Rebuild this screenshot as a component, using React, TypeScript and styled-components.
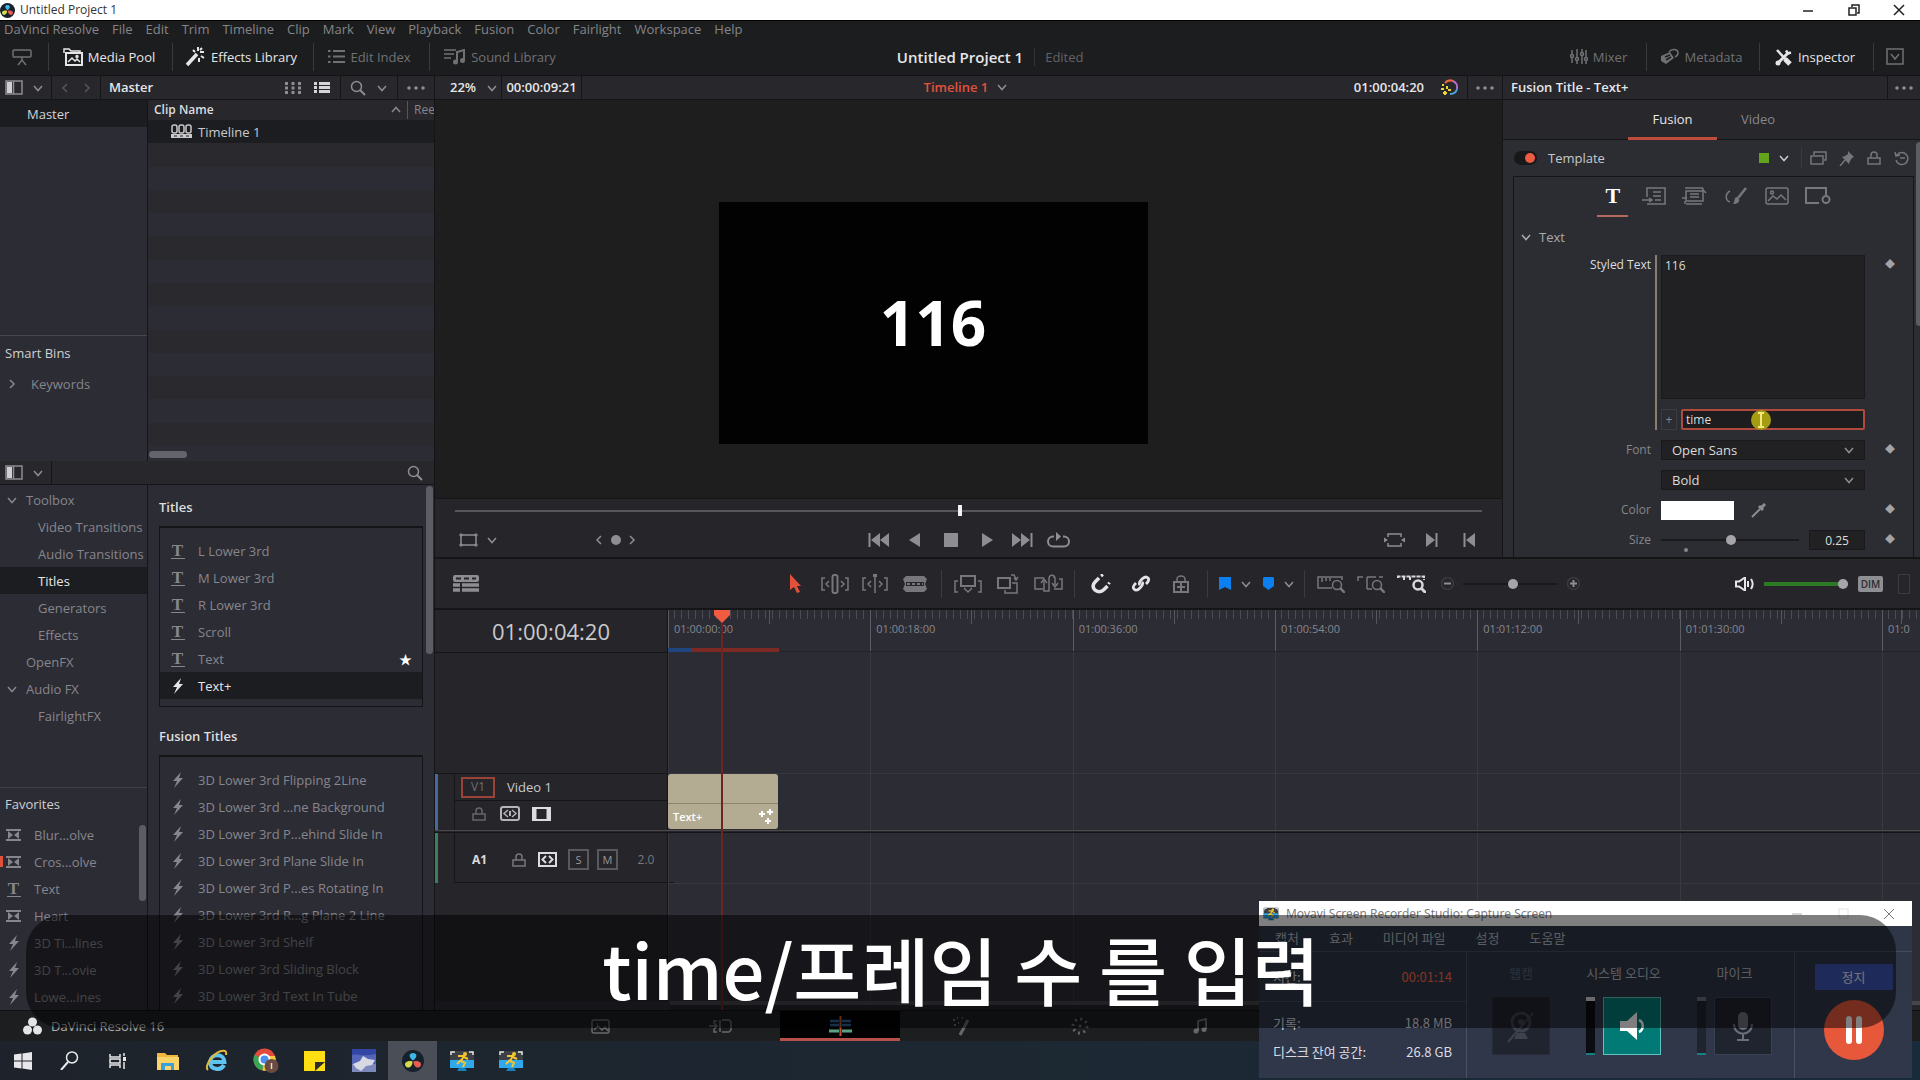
import React from "react";
import styled, { createGlobalStyle, css } from "styled-components";

const sans = `"Open Sans", "Noto Sans CJK KR", sans-serif`;
const c = {
  line: "#151518",
  bar: "#25252a",
  head: "#27272c",
  panel: "#2c2c35",
  dark: "#1c1d20",
  field: "#212123",
  dim: "#86868c",
  text: "#a9a9ae",
  bright: "#e6e6e8",
  red: "#e2513c",
};

const Global = createGlobalStyle`
  *, *::before, *::after { box-sizing: border-box; }
  html, body, #root { margin: 0; height: 100%; }
  body { background: #1c1d1f; overflow: hidden; }
  button, input, select, textarea { font: inherit; color: inherit; }
  ul { list-style: none; margin: 0; padding: 0; }
  h1, h2, h3, p { margin: 0; font: inherit; }
`;

/* ---------- shared parts ---------- */

const Svg = ({ w, h, children, vb }: { w: number; h: number; vb?: string; children: React.ReactNode }) => (
  <svg width={w} height={h} viewBox={vb ?? `0 0 ${w} ${h}`} fill="none" stroke="currentColor" strokeWidth="1.5" aria-hidden="true">
    {children}
  </svg>
);

const Button = styled.button<{ $w?: number; $color?: string }>`
  display: inline-flex;
  align-items: center;
  justify-content: center;
  flex: none;
  gap: 6px;
  width: ${(p) => (p.$w ? `${p.$w}px` : "auto")};
  height: 100%;
  padding: 0;
  border: 0;
  background: none;
  color: ${(p) => p.$color ?? "#8d8d92"};
  svg { display: block; flex: none; }
`;

const Chevron = ({ dir = "down" }: { dir?: "down" | "up" | "left" | "right" }) => (
  <Svg w={12} h={12}>
    <path
      d={{ down: "M2 4l4 4.5L10 4", up: "M2 8l4-4.5L10 8", left: "M8 2L4 6l4 4", right: "M4 2l4 4-4 4" }[dir]}
    />
  </Svg>
);
const SidebarIcon = () => (
  <Svg w={18} h={15}>
    <rect x="1" y="1" width="16" height="13" />
    <rect x="2" y="2" width="5" height="11" fill="#d0d0d3" stroke="none" />
    <path d="M8.500 1v13" />
  </Svg>
);
const SearchIcon = () => (
  <Svg w={16} h={16}>
    <circle cx="6.500" cy="6.500" r="5" />
    <path d="M10 10l5 5" strokeWidth="2" />
  </Svg>
);
const DotsIcon = () => (
  <Svg w={18} h={4}>
    {[2, 9, 16].map((x) => <circle key={x} cx={x} cy="2" r="1.800" fill="currentColor" stroke="none" />)}
  </Svg>
);
const BoltIcon = () => (
  <Svg w={12} h={16}>
    <path d="M9 0L1 9h4l-3 7 9-10H7z" fill="currentColor" stroke="none" />
  </Svg>
);
const TransitionIcon = () => (
  <Svg w={15} h={12}>
    <path d="M0 1h15M0 11h15" strokeWidth="2" />
    <path d="M2 2l5 4-5 4zM13 2L8 6l5 4z" fill="currentColor" stroke="none" />
  </Svg>
);
const LockIcon = () => (
  <Svg w={14} h={14}>
    <rect x="1" y="7" width="12" height="6" />
    <path d="M4 7V4a3 3 0 0 1 6 0v3" />
  </Svg>
);
const TypeIcon = styled.span<{ $big?: boolean }>`
  display: inline-block;
  width: 14px;
  border-bottom: ${(p) => (p.$big ? "0" : "1px solid currentColor")};
  font: bold ${(p) => (p.$big ? "22px/22px" : "17px/15px")} "Liberation Serif", serif;
  text-align: center;
`;

/* ---------- window chrome ---------- */

const App = styled.div`
  position: relative;
  display: flex;
  flex-direction: column;
  height: 100vh;
  overflow: hidden;
  background: #1c1d1f;
  color: ${c.text};
  font: 13px/18px ${sans};
`;
const TitleBar = styled.header`
  display: flex;
  align-items: center;
  flex: none;
  height: 20px;
  background: #fff;
  color: #333;
  font-size: 12px;
  line-height: 16px;
  gap: 5px;
`;
const WindowButtons = styled.div`
  display: flex;
  height: 100%;
  margin-left: auto;
`;
const Menu = styled.nav`
  display: flex;
  flex: none;
  gap: 13px;
  height: 18px;
  padding: 0 4px;
  border-top: 1px solid #000;
  font-size: 13px;
  line-height: 16px;
`;
const MenuLink = styled.a`
  color: #858587;
  text-decoration: none;
`;
const Toolbar = styled.div`
  display: grid;
  grid-template-columns: 1fr auto 1fr;
  align-items: center;
  flex: none;
  height: 38px;
  border-bottom: 1px solid ${c.line};
`;
const ToolGroup = styled.div`
  display: flex;
  align-items: center;
  height: 28px;
`;
const ToolTab = styled.button<{ $on?: boolean; $w: number }>`
  display: flex;
  align-items: center;
  justify-content: center;
  gap: 5px;
  width: ${(p) => p.$w}px;
  height: 28px;
  padding: 0 4px 0 0;
  border: 0;
  border-right: 1px solid #3a3a3d;
  background: none;
  color: ${(p) => (p.$on ? c.bright : "#717175")};
  font-size: 13px;
  font-weight: ${(p) => (p.$on ? 500 : 400)};
  white-space: nowrap;
  &:last-child { border-right: 0; }
`;
const ProjectName = styled.h1`
  color: ${c.bright};
  font-size: 15px;
  font-weight: 600;
`;
const EditState = styled.span`
  margin: 0 auto 0 11px;
  padding-left: 10px;
  border-left: 1px solid #333;
  color: #626266;
`;

/* ---------- body layout ---------- */

const Body = styled.main`
  display: grid;
  grid-template-columns: 435px minmax(0, 1fr);
  flex: 1;
  min-height: 0;
`;
const LeftColumn = styled.div`
  display: flex;
  flex-direction: column;
  min-height: 0;
  border-right: 1px solid ${c.line};
`;
const RightColumn = styled.div`
  display: flex;
  flex-direction: column;
  min-width: 0;
  min-height: 0;
`;
const Split = styled.div<{ $h?: number }>`
  display: grid;
  grid-template-columns: 148px minmax(0, 1fr);
  flex: ${(p) => (p.$h ? `0 0 ${p.$h}px` : "1")};
  min-height: 0;
  overflow: hidden;
  background: ${c.panel};
`;
const SideColumn = styled.div`
  display: flex;
  flex-direction: column;
  min-height: 0;
  border-right: 1px solid ${c.line};
`;
const PanelHead = styled.div`
  display: flex;
  align-items: center;
  flex: none;
  height: 24px;
  border-bottom: 1px solid ${c.line};
  background: ${c.head};
  color: #8d8d92;
`;
const HeadTitle = styled.h2<{ $w?: number; $color?: string; $grow?: boolean }>`
  flex: ${(p) => (p.$grow ? "1" : "none")};
  width: ${(p) => (p.$w ? `${p.$w}px` : "auto")};
  padding: 0 8px 1px;
  color: ${(p) => p.$color ?? c.bright};
  font-size: 13px;
  font-weight: 600;
`;
const TimelinePick = styled.button`
  display: flex;
  align-items: center;
  gap: 8px;
  padding: 0 0 1px 4px;
  border: 0;
  background: none;
  color: ${c.red};
  font-weight: 600;
  svg { color: #8d8d92; }
`;
const HeadCell = styled.div<{ $w?: number; $line?: boolean; $pad?: number }>`
  display: flex;
  align-items: center;
  justify-content: center;
  width: ${(p) => (p.$w ? `${p.$w}px` : "auto")};
  height: 23px;
  padding-left: ${(p) => p.$pad ?? 0}px;
  border-right: ${(p) => (p.$line === false ? "0" : `1px solid ${c.line}`)};
`;

/* ---------- media pool ---------- */

const BinRow = styled.div`
  height: 27px;
  padding: 5px 27px;
  background: ${c.dark};
  color: #d4d4d6;
`;
const SmartBins = styled.div`
  margin-top: auto;
  height: 126px;
  border-top: 1px solid #484850;
  h3 { padding: 8px 5px 0; color: #d0d0d3; font-weight: 500; }
  p { display: flex; align-items: center; gap: 13px; padding: 13px 6px; color: ${c.dim}; }
`;
const ClipList = styled.div`
  display: flex;
  flex-direction: column;
  min-height: 0;
  padding-bottom: 1px;
`;
const ClipHead = styled.div`
  display: flex;
  align-items: center;
  height: 20px;
  padding-left: 6px;
  background: ${c.head};
  color: ${c.dim};
  font-size: 12px;
  overflow: hidden;
  strong { color: #dcdcde; font-weight: 600; }
  svg { margin-left: auto; }
  span { width: 27px; margin-left: 5px; padding-left: 6px; border-left: 1px solid #55555a; overflow: hidden; }
`;
const ClipRow = styled.div<{ $selected?: boolean }>`
  display: flex;
  align-items: center;
  flex: 1;
  gap: 6px;
  padding-left: 23px;
  color: #c9c9cc;
  &:nth-child(even) { background: ${(p) => (p.$selected ? c.dark : c.panel)}; }
  &:nth-child(odd) { background: #2a292e; }
`;
const HScroll = styled.div`
  height: 14px;
  padding: 5px 1px 0;
  &::before { content: ""; display: block; width: 38px; height: 7px; border-radius: 4px; background: #64656c; }
`;

/* ---------- effects library ---------- */

const Tree = styled.ul`
  flex: 1;
  min-height: 0;
  padding-top: 1px;
  overflow: hidden;
`;
const TreeRow = styled.li<{ $depth: number; $on?: boolean }>`
  display: flex;
  align-items: center;
  height: 27px;
  padding-left: ${(p) => (p.$depth === 0 ? 6 : p.$depth === 1 ? 26 : 38)}px;
  gap: 8px;
  background: ${(p) => (p.$on ? c.dark : "none")};
  color: ${(p) => (p.$on ? c.bright : c.dim)};
  white-space: nowrap;
`;
const Favorites = styled.section`
  position: relative;
  height: 223px;
  padding-top: 7px;
  border-top: 1px solid #404048;
  overflow: hidden;
  h3 { padding: 0 5px 8px; color: #cfcfd2; font-weight: 500; }
`;
const VScroll = styled.span<{ $top: number; $h: number; $right?: number }>`
  position: absolute;
  top: ${(p) => p.$top}px;
  right: ${(p) => p.$right ?? 1}px;
  width: 7px;
  height: ${(p) => p.$h}px;
  border-radius: 4px;
  background: #5b5d65;
`;
const EffectRow = styled.li<{ $on?: boolean; $inset: number; $gap: number; $mark?: boolean }>`
  display: flex;
  align-items: center;
  gap: ${(p) => p.$gap}px;
  height: 27px;
  padding: 0 ${(p) => (p.$inset > 8 ? 10 : 0)}px 0 ${(p) => p.$inset}px;
  background: ${(p) => (p.$mark ? `linear-gradient(${c.red}, ${c.red}) 0 50% / 3px 11px no-repeat` : p.$on ? c.dark : "none")};
  color: ${(p) => (p.$on ? c.bright : c.dim)};
  white-space: nowrap;
  i { display: flex; justify-content: center; width: 15px; font-style: normal; }
  b { margin-left: auto; color: #fff; font-size: 13px; font-weight: 400; }
`;
const TitlesColumn = styled.div`
  position: relative;
  padding: 13px 11px 0 11px;
  overflow: hidden;
  h3 { height: 28px; color: #dededf; font-weight: 600; }
`;
const TitlesBox = styled.ul`
  margin-bottom: 20px;
  padding: 9px 0 7px;
  border: 1px solid ${c.line};
  border-top-width: 2px;
`;

/* ---------- viewer ---------- */

const Upper = styled.div`
  display: grid;
  grid-template-columns: minmax(0, 1fr) 417px;
  flex: 0 0 483px;
  min-height: 0;
  border-bottom: 2px solid ${c.line};
`;
const Viewer = styled.section`
  display: flex;
  flex-direction: column;
  min-height: 0;
  border-right: 1px solid ${c.line};
  background: ${c.bar};
`;
const Stage = styled.div`
  display: flex;
  justify-content: center;
  flex: 1;
  padding: 102px 71px 0 0;
  border-bottom: 1px solid ${c.line};
  background: #1e1e1e;
`;
const Frame = styled.div`
  display: flex;
  align-items: center;
  justify-content: center;
  width: 429px;
  height: 242px;
  padding-bottom: 3px;
  background: #020202;
  color: #fff;
  font-size: 62px;
  font-weight: 700;
  line-height: 62px;
`;
const rangeBase = css`
  appearance: none;
  flex: none;
  height: 12px;
  margin: 0;
  background: none;
  &::-webkit-slider-runnable-track { height: 2px; background: var(--track); }
`;
const Scrubber = styled.input`
  ${rangeBase}
  --track: #55555a;
  display: block;
  width: calc(100% - 40px);
  height: 24px;
  margin: 0 20px;
  border: 0;
  &::-webkit-slider-thumb { appearance: none; width: 4px; height: 11px; margin-top: -5px; background: #f2f2f2; }
`;
const Range = styled.input<{ $w: number; $track: string; $thick?: boolean }>`
  ${rangeBase}
  --track: ${(p) => p.$track};
  width: ${(p) => p.$w}px;
  &::-webkit-slider-runnable-track { height: ${(p) => (p.$thick ? 4 : 2)}px; }
  &::-webkit-slider-thumb {
    appearance: none;
    width: 10px;
    height: 10px;
    margin-top: ${(p) => (p.$thick ? -3 : -4)}px;
    border-radius: 5px;
    background: #a6a6aa;
  }
`;
const Transport = styled.div`
  display: grid;
  grid-template-columns: 1fr auto 1fr;
  height: 34px;
  padding: 0 15px;
`;
const Cluster = styled.div<{ $end?: boolean; $gap?: number }>`
  display: flex;
  align-items: center;
  justify-content: ${(p) => (p.$end ? "flex-end" : "flex-start")};
  gap: ${(p) => p.$gap ?? 0}px;
`;
const Keyframes = styled.div`
  display: flex;
  align-items: center;
  height: 100%;
  margin-left: 93px;
`;

/* ---------- inspector ---------- */

const Inspector = styled.section`
  position: relative;
  display: flex;
  flex-direction: column;
  min-height: 0;
  overflow: hidden;
  background: #2b2d32;
`;
const Tabs = styled.div`
  display: flex;
  flex: none;
  height: 40px;
  padding-left: 125px;
  border-bottom: 1px solid ${c.line};
  background: ${c.head};
`;
const Tab = styled.button<{ $on?: boolean }>`
  width: ${(p) => (p.$on ? 89 : 82)}px;
  height: 40px;
  padding: 0;
  border: 0;
  border-bottom: 3px solid ${(p) => (p.$on ? "#c14b3b" : "transparent")};
  background: none;
  color: ${(p) => (p.$on ? c.bright : c.dim)};
`;
const TemplateRow = styled.div`
  display: flex;
  align-items: center;
  flex: none;
  height: 36px;
  padding: 0 5px 0 11px;
  color: #c8c8cb;
  label { margin-right: auto; }
`;
const Switch = styled.input`
  appearance: none;
  display: flex;
  justify-content: flex-end;
  align-items: center;
  width: 23px;
  height: 14px;
  margin: 0 11px 0 0;
  padding: 2px;
  border-radius: 7px;
  background: #17181a;
  &::before { content: ""; width: 10px; height: 10px; border-radius: 5px; background: #ee5b45; }
`;
const Swatch = styled.span`
  width: 10px;
  height: 10px;
  background: #62a51c;
`;
const Pipe = styled.span<{ $h?: number; $m?: number }>`
  flex: none;
  width: 1px;
  height: ${(p) => p.$h ?? 28}px;
  margin: 0 ${(p) => p.$m ?? 6}px;
  background: #3a3a40;
`;
const Settings = styled.div`
  flex: 1;
  margin: 0 6px 0 10px;
  padding-right: 8px;
  border: solid ${c.line};
  border-width: 1px 1px 0;
`;
const ModeBar = styled.div`
  display: flex;
  height: 41px;
  padding-left: 83px;
`;
const Mode = styled.button<{ $on?: boolean }>`
  display: flex;
  align-items: center;
  justify-content: center;
  width: 31px;
  height: 40px;
  margin-right: 10px;
  padding: 0;
  border: 0;
  border-bottom: 2px solid ${(p) => (p.$on ? "#b5695c" : "transparent")};
  background: none;
  color: ${(p) => (p.$on ? "#fff" : "#77787d")};
`;
const SectionTitle = styled.h3`
  display: flex;
  align-items: center;
  gap: 7px;
  height: 37px;
  padding-left: 6px;
`;
const Field = styled.div`
  display: grid;
  grid-template-columns: 137px 204px 1fr;
  column-gap: 10px;
  margin-bottom: 10px;
  justify-items: start;
  > :last-child { justify-self: center; height: 20px; color: #a3a3a7; font-size: 10px; line-height: 18px; }
`;
const FieldLabel = styled.label<{ $on?: boolean }>`
  justify-self: end;
  color: ${(p) => (p.$on ? "#dcdcde" : c.dim)};
  font-size: 12px;
  line-height: 20px;
`;
const TextBlock = styled.div`
  display: flex;
  flex-direction: column;
  gap: 10px;
  width: 210px;
  margin-left: -6px;
  padding-left: 4px;
  border-left: 2px solid #8a7f6d;
`;
const TextArea = styled.textarea`
  display: block;
  width: 204px;
  height: 144px;
  padding: 1px 3px;
  border: 1px solid #1a1a1c;
  outline: 0;
  resize: none;
  background: ${c.field};
  color: #dcdcde;
  font-size: 12px;
`;
const Expression = styled.div`
  position: relative;
  display: flex;
  gap: 4px;
  height: 21px;
  button { width: 16px; height: 21px; padding: 0; border: 1px solid #3b3b40; background: none; color: ${c.dim}; font-size: 12px; line-height: 16px; }
  input { width: 184px; height: 21px; padding: 0 3px 1px; border: 2px solid #b04a3d; border-radius: 2px; outline: 0; background: #1d1d1f; color: #dcdcde; font-size: 12px; }
`;
const PointerMark = styled.span`
  position: absolute;
  top: 1px;
  left: 90px;
  display: flex;
  align-items: center;
  justify-content: center;
  width: 20px;
  height: 20px;
  border-radius: 10px;
  background: #a59c14;
  color: #f1e97a;
`;
const SelectBox = styled.div`
  position: relative;
  select {
    appearance: none;
    width: 204px;
    height: 20px;
    padding: 0 10px;
    border: 1px solid #1a1a1c;
    background: ${c.field};
    color: #dcdcde;
    line-height: 18px;
  }
  svg { position: absolute; top: 4px; right: 10px; color: #8d8d92; pointer-events: none; }
`;
const ColorRow = styled.div`
  display: flex;
  align-items: center;
  gap: 17px;
  height: 20px;
  input { appearance: none; width: 73px; height: 19px; padding: 0; border: 0; background: #fff; }
  input::-webkit-color-swatch-wrapper { padding: 0; }
  input::-webkit-color-swatch { border: 0; }
`;
const SizeRow = styled.div`
  display: flex;
  align-items: center;
  justify-content: space-between;
  width: 204px;
  height: 20px;
  > :last-child {
    width: 56px; height: 20px; padding: 0; border: 1px solid #1a1a1c; background: ${c.field}; color: #dcdcde; font-size: 12px; text-align: center;
  }
`;
const DefaultDot = styled.div`
  width: 4px;
  height: 4px;
  margin: -12px 0 0 170px;
  border-radius: 2px;
  background: ${c.dim};
`;

/* ---------- timeline ---------- */

const EditBar = styled.div`
  display: flex;
  align-items: center;
  flex: none;
  height: 51px;
  padding-right: 10px;
  border-bottom: 2px solid ${c.line};
  background: ${c.bar};
`;
const EditStart = styled.div`
  display: flex;
  width: 340px;
  padding-left: 18px;
`;
const Audio = styled.div`
  display: flex;
  align-items: center;
  gap: 10px;
  margin-left: auto;
`;
const Dim = styled.button`
  width: 25px;
  height: 16px;
  padding: 0;
  border: 0;
  border-radius: 2px;
  background: #8f8f93;
  color: #2b2b2e;
  font-size: 10px;
  font-weight: 600;
  line-height: 16px;
`;
const Meter = styled.span`
  width: 12px;
  height: 20px;
  margin-left: 5px;
  border: 1px solid #3a3a40;
`;
const Timeline = styled.section`
  position: relative;
  display: flex;
  flex-direction: column;
  flex: 1;
  min-height: 0;
  background: ${c.panel};
`;
const TrackRow = styled.div<{ $h?: number }>`
  display: grid;
  grid-template-columns: 233px minmax(0, 1fr);
  flex: ${(p) => (p.$h ? `0 0 ${p.$h}px` : "1")};
  min-height: 0;
`;
const TrackHead = styled.div<{ $color?: string; $line?: boolean }>`
  display: flex;
  min-width: 0;
  border-right: 1px solid ${c.line};
  border-top: ${(p) => (p.$line ? `1px solid ${c.line}` : "0")};
  background: ${c.bar};
  box-shadow: ${(p) => (p.$color ? `inset 3px 0 ${p.$color}` : "none")};
`;
const Timecode = styled.output`
  margin: auto;
  color: #c9c9cc;
  font-size: 22px;
  line-height: 26px;
`;
const divisions = css`
  display: grid;
  grid-template-columns: repeat(6, minmax(0, 1fr)) 38px;
`;
const Ruler = styled.div`
  ${divisions}
  border-bottom: 1px solid #242429;
`;
const RulerPart = styled.div`
  overflow: hidden;
  padding: 12px 0 0 5px;
  border-left: 1px solid #5c5c62;
  background:
    linear-gradient(#55555b, #55555b) 50% 0 / 1px 14px no-repeat,
    repeating-linear-gradient(to right, #4b4b51 0 1px, transparent 1px 7px) 5px 0 / 100% 9px no-repeat;
  color: ${c.dim};
  font-size: 11px;
  line-height: 14px;
`;
const Lane = styled.div<{ $line?: boolean }>`
  ${divisions}
  position: relative;
  border-top: ${(p) => (p.$line ? "1px solid #37373d" : "0")};
  > i { border-left: 1px solid #39393f; }
`;
const RenderBar = styled.span`
  position: absolute;
  top: 38px;
  left: 233px;
  width: 111px;
  height: 4px;
  background: linear-gradient(to right, #21467f 24px, #7d2a24 24px);
`;
const Playhead = styled.span`
  position: absolute;
  top: 0;
  bottom: 0;
  left: 286px;
  width: 2px;
  background: #70241f;
  svg { position: absolute; top: 0; left: -7px; display: block; }
`;
const Clip = styled.div`
  position: absolute;
  top: 0;
  left: 0;
  display: flex;
  flex-direction: column;
  width: 110px;
  height: 55px;
  border-radius: 3px;
  background: #b4ac92;
  color: #fff;
  font-size: 11px;
  font-weight: 600;
  &::before { content: ""; height: 30px; border-bottom: 1px solid #8a836d; }
  span { display: flex; align-items: center; justify-content: space-between; height: 25px; padding: 0 4px 0 5px; }
`;
const Gutter = styled.div<{ $w: number }>`
  flex: none;
  width: ${(p) => p.$w}px;
  border-right: 1px solid ${c.line};
`;
const VideoHead = styled.div`
  flex: 1;
  > div { display: flex; align-items: center; height: 26px; padding-left: 6px; gap: 12px; color: #c9c9cc; }
  > div + div { height: 26px; padding-left: 14px; border-top: 1px solid ${c.line}; }
`;
const Destination = styled.button`
  width: 34px;
  height: 21px;
  padding: 0;
  border: 2px solid #9b4339;
  background: none;
  color: #707075;
  font-size: 12px;
  line-height: 14px;
`;
const Divider = styled.div`
  flex: none;
  height: 3px;
  border-top: 1px solid #4c4a48;
  border-bottom: 1px solid ${c.line};
  background: ${c.bar};
`;
const AudioHead = styled.div`
  display: flex;
  align-items: center;
  flex: 1;
  padding-top: 4px;
  border-bottom: 1px solid ${c.line};
  color: ${c.dim};
  font-size: 12px;
  strong { width: 49px; color: #dcdcde; text-align: center; }
`;
const Toggle = styled.button`
  width: 21px;
  height: 21px;
  margin-left: 8px;
  padding: 0;
  border: 2px solid #58585d;
  background: none;
  color: #98989c;
  font-size: 11px;
  line-height: 16px;
`;
const LaneScroll = styled.div`
  flex: none;
  height: 9px;
  margin-left: 235px;
  border-top: 4px solid #45454c;
  background: ${c.bar};
`;

/* ---------- bottom bars ---------- */

const PageBar = styled.nav`
  display: grid;
  grid-template-columns: 1fr auto 1fr;
  flex: none;
  height: 31px;
  border-top: 1px solid #101012;
  background: #1d1e20;
`;
const Brand = styled.div`
  display: flex;
  align-items: center;
  gap: 9px;
  padding-left: 23px;
  color: #b0b0b3;
`;
const Pages = styled.div`
  display: flex;
`;
const Page = styled.button<{ $on?: boolean }>`
  display: flex;
  align-items: center;
  justify-content: center;
  width: 120px;
  height: 30px;
  padding: 3px 0 0;
  border: 0;
  border-bottom: 3px solid ${(p) => (p.$on ? "#b5504a" : "transparent")};
  background: ${(p) => (p.$on ? "#020203" : "none")};
  color: #68686c;
`;
const Taskbar = styled.footer`
  display: flex;
  flex: none;
  height: 39px;
  background: linear-gradient(to right, #1e232b, #1c2833 60%, #182b3b);
`;
const Task = styled.button<{ $on?: boolean }>`
  display: flex;
  align-items: center;
  justify-content: center;
  width: 49px;
  height: 39px;
  padding: 0;
  border: 0;
  background: ${(p) => (p.$on ? "#4a4e56" : "none")};
  color: #e8e8ea;
  &:first-child { width: 45px; }
`;

/* ---------- recorder window and caption ---------- */

const Recorder = styled.section`
  position: absolute;
  right: 8px;
  bottom: 2px;
  display: flex;
  flex-direction: column;
  width: 653px;
  height: 177px;
  background: linear-gradient(#2f3646, #30374a);
  color: #dcdde2;
  font: 13px/18px "Noto Sans CJK KR", sans-serif;
`;
const RecorderTitle = styled.div`
  display: flex;
  align-items: center;
  flex: none;
  gap: 7px;
  height: 25px;
  padding-left: 4px;
  background: #fff;
  color: #77777c;
  font: 12px/16px ${sans};
`;
const RecorderMenu = styled.nav`
  display: flex;
  gap: 30px;
  height: 26px;
  padding: 3px 16px;
  border-bottom: 1px solid #454c5e;
  a { color: #b9bbc3; text-decoration: none; font-size: 13px; }
`;
const RecorderBody = styled.div`
  display: grid;
  grid-template-columns: 208px minmax(0, 1fr) 117px;
  flex: 1;
  > div { border-right: 1px solid #4b5264; }
  > div:last-child { border-right: 0; }
`;
const Stat = styled.div<{ $h: number; $line?: boolean }>`
  display: flex;
  align-items: center;
  justify-content: space-between;
  height: ${(p) => p.$h}px;
  padding: 0 14px;
  border-bottom: ${(p) => (p.$line ? "1px solid #454c5e" : "0")};
  em { color: #ff6a45; font-style: normal; }
`;
const Sources = styled.div`
  display: flex;
  justify-content: space-between;
  padding: 12px 22px 0 25px;
`;
const Source = styled.div<{ $off?: boolean }>`
  display: flex;
  flex-direction: column;
  align-items: center;
  gap: 15px;
  color: ${(p) => (p.$off ? "#5b6070" : "#b9bbc3")};
  white-space: nowrap;
  > div { display: flex; gap: 8px; }
`;
const SourceButton = styled.button<{ $on?: boolean; $off?: boolean }>`
  display: flex;
  align-items: center;
  justify-content: center;
  width: 58px;
  height: 58px;
  padding: 0;
  border: 1px solid ${(p) => (p.$on ? "#5fc4bf" : p.$off ? "#262b37" : "#3b4253")};
  background: ${(p) => (p.$on ? "#017a76" : "#20242f")};
  color: ${(p) => (p.$on ? "#fff" : p.$off ? "#3d424e" : "#6c707b")};
`;
const Level = styled.span<{ $on?: boolean }>`
  width: 9px;
  height: 58px;
  border-top: 4px solid ${(p) => (p.$on ? "#d5d5d8" : "#6b6f7a")};
  border-bottom: 2px solid #16807c;
  background: ${(p) => (p.$on ? "#0c0d12" : "#20242f")};
`;
const Actions = styled.div`
  display: flex;
  flex-direction: column;
  align-items: center;
  gap: 10px;
  padding-top: 12px;
`;
const StopButton = styled.button`
  width: 78px;
  height: 26px;
  padding: 0;
  border: 0;
  background: #3c56b4;
  color: #e6e8f2;
`;
const PauseButton = styled.button`
  display: flex;
  align-items: center;
  justify-content: center;
  width: 60px;
  height: 60px;
  padding: 0;
  border: 0;
  border-radius: 30px;
  background: #e7583a;
  color: #fff;
`;
const Caption = styled.div`
  position: absolute;
  right: 24px;
  bottom: 52px;
  left: 26px;
  display: flex;
  align-items: center;
  justify-content: center;
  height: 113px;
  padding-bottom: 8px;
  border-radius: 36px;
  background: rgba(0, 0, 0, 0.5);
  color: #fff;
  font: 500 74px/80px "Noto Sans CJK KR", sans-serif;
  white-space: pre;
`;

/* ---------- drawings ---------- */

const fill = { fill: "currentColor", stroke: "none" };

const ResolveLogo = ({ s }: { s: number }) => (
  <svg width={s} height={s} viewBox="0 0 22 22" aria-hidden="true">
    <circle cx="11" cy="11" r="11" fill="#17212b" />
    <path d="M11 10.500C6 7 7 3 11 3s5 4 0 7.500z" fill="#3fb7e8" />
    <path d="M10.500 11.500c0 6-5 7.500-7 4.500s2-6 7-4.500z" fill="#d3dc4b" />
    <path d="M11.500 11.500c0 6 5 7.500 7 4.500s-2-6-7-4.500z" fill="#ea5b52" />
  </svg>
);
const RecorderLogo = ({ w, h }: { w: number; h: number }) => (
  <svg width={w} height={h} viewBox="0 0 26 22" aria-hidden="true">
    <rect x="1" y="1" width="24" height="17" rx="1" fill="#3d4147" />
    <path d="M1 10h24v8H1z" fill="#2fa9ec" />
    <path d="M8 21h10l-2-3h-6z" fill="#1580bd" />
    <path d="M2 5V2h4M24 5V2h-4" stroke="#e6e6e6" strokeWidth="1.500" fill="none" />
    <circle cx="16" cy="4" r="2" fill="#f3c52f" />
    <path d="M9 6l6 0-3 5 4 2-2 4M12 10l-4 4M15 7l4 2" stroke="#f3c52f" strokeWidth="2" fill="none" />
  </svg>
);

const icons: Record<string, React.ReactNode> = {
  screen: <Svg w={20} h={20}><rect x="1" y="3" width="18" height="7" rx="1" /><path d="M6 18l4-5 4 5M10 10v4" /></Svg>,
  media: <Svg w={21} h={19}><path d="M2 6V2h5l2 2h9v2" /><rect x="4" y="6" width="16" height="12" strokeWidth="2" /><path d="M6 15l4-4 3 3 2-2 3 3" /><circle cx="15" cy="9.500" r="1" /></Svg>,
  wand: <Svg w={21} h={21}><path d="M2 19L12 8" strokeWidth="3.500" /><path d="M13 1v4M19 6h-4M17 2l-2 2M16 10l3 2M8 4l2 2M14 12v4" strokeWidth="2" /></Svg>,
  index: <Svg w={17} h={15}><path d="M5 2h12M5 7.500h12M5 13h12M0 2h2.500M0 7.500h2.500M0 13h2.500" strokeWidth="2" /></Svg>,
  sound: <Svg w={22} h={17}><path d="M0 2h12M0 6h10M0 10h7" /><path d="M13 14V4l7-2v10" strokeWidth="2" /><circle cx="11.500" cy="14" r="2.500" {...fill} /><circle cx="18.500" cy="12.500" r="2.500" {...fill} /></Svg>,
  mixer: <Svg w={18} h={17}><path d="M2 2v4M2 10v5M7 1v8M7 13v3M12 1v3M12 8v8M16 2v7M16 13v3" /><circle cx="2" cy="8" r="1.500" /><circle cx="7" cy="11" r="1.500" /><circle cx="12" cy="6" r="1.500" /><circle cx="16" cy="11" r="1.500" /></Svg>,
  meta: <Svg w={20} h={17}><path d="M1 8l9-4 4 6-8 6-5-3z" {...fill} /><path d="M9 4c3-4 9-3 9 1 0 2-1 3-3 4" /><path d="M5 9l5-2M6 12l5-3" stroke="#1c1d1f" /></Svg>,
  inspect: <Svg w={19} h={18}><path d="M3 2l12 13" strokeWidth="2.500" /><path d="M11 11l5 5" strokeWidth="5" /><path d="M4 15L14 5" strokeWidth="3" /><path d="M12 2.500l2 3 3-1" strokeWidth="2.500" /><circle cx="4" cy="15" r="2.500" {...fill} /></Svg>,
  expand: <Svg w={18} h={17}><rect x="1" y="1" width="16" height="15" /><path d="M5 6l4 5 4-5" /></Svg>,
  grid: <Svg w={17} h={12}>{[0, 6.5, 13].map((x) => [0, 4.5, 9].map((y) => <rect key={`${x}${y}`} x={x} y={y} width="3" height="3" {...fill} />))}</Svg>,
  list: <Svg w={16} h={12}><path d="M0 1.500h3M0 5.500h3M0 9.500h3M5 1.500h11M5 5.500h11M5 9.500h11" strokeWidth="3" /></Svg>,
  palette: <Svg w={19} h={17}><path d="M5 4a7 7 0 0 1 8-2" stroke="#f0693e" strokeWidth="2" /><path d="M13 2a7 7 0 0 1 4 8" stroke="#b96ad8" strokeWidth="2" /><path d="M17 10a7 7 0 0 1-7 5" stroke="#4aa3df" strokeWidth="2" /><path d="M2 6h2M1 10h3M7 7v3M5 12v4M3 14h4M8 11h3" stroke="#e7d431" strokeWidth="2" /></Svg>,
  crop: <Svg w={19} h={14}><rect x="2" y="2" width="15" height="10" /><path d="M0 2h4M2 0v4M15 12h4M17 10v4M15 2h4M17 0v4M0 12h4M2 10v4" strokeWidth="1" /></Svg>,
  first: <Svg w={21} h={14}><path d="M1.500 0v14" strokeWidth="2" /><path d="M12 0v14L3 7zM21 0v14l-9-7z" {...fill} /></Svg>,
  reverse: <Svg w={12} h={14}><path d="M11 0v14L0 7z" {...fill} /></Svg>,
  stop: <Svg w={14} h={14}><path d="M0 0h14v14H0z" {...fill} /></Svg>,
  play: <Svg w={12} h={14}><path d="M1 0v14l11-7z" {...fill} /></Svg>,
  last: <Svg w={21} h={14}><path d="M19.500 0v14" strokeWidth="2" /><path d="M9 0v14l9-7zM0 0v14l9-7z" {...fill} /></Svg>,
  loop: <Svg w={23} h={17}><path d="M7 4.500H6a5 5 0 0 0 0 10h11a5 5 0 0 0 0-10h-1M10 4.500h3" strokeWidth="2" /><path d="M9 0l5 4.500L9 9z" {...fill} /></Svg>,
  match: <Svg w={21} h={14}><path d="M4 4V1h13v3M4 10v3h13v-3" /><path d="M0 4.500L4 7 0 9.500zM21 4.500L17 7l4 2.500z" {...fill} /></Svg>,
  next: <Svg w={12} h={14}><path d="M0 0v14l9-7z" {...fill} /><path d="M10.500 0v14" strokeWidth="2" /></Svg>,
  prev: <Svg w={12} h={14}><path d="M12 0v14L3 7z" {...fill} /><path d="M1.500 0v14" strokeWidth="2" /></Svg>,
  tlview: <Svg w={26} h={17}><rect x="0" y="0" width="26" height="7" rx="2" {...fill} /><path d="M3 3.500h5M11 3.500h5M19 3.500h4" stroke="#25252a" strokeWidth="2" /><path d="M0 10h7M9 10h17M0 15h7M9 15h17" strokeWidth="3.500" /></Svg>,
  arrow: <Svg w={13} h={19}><path d="M1 0l11 12H8l3 6-3 1-3-6-4 3z" {...fill} /></Svg>,
  trim: <Svg w={28} h={20}><path d="M4 4H1v12h3M24 4h3v12h-3M8 7l-3 3 3 3M20 7l3 3-3 3" /><rect x="11.500" y="1" width="5" height="18" rx="2" strokeWidth="2" /></Svg>,
  dyn: <Svg w={26} h={20}><path d="M4 4H1v12h3M22 4h3v12h-3M9 7l-3 3 3 3M17 7l3 3-3 3M13 3v16" /><path d="M11 0h4v3h-4z" {...fill} /></Svg>,
  blade: <Svg w={24} h={16}><path d="M3 0h18l3 3-2 5 2 5-3 3H3l-3-3 2-5-2-5z" {...fill} /><path d="M3 6h18v4H3z" fill="#25252a" stroke="none" /><path d="M4 8h16" strokeWidth="2" strokeDasharray="3 2" /></Svg>,
  insert: <Svg w={28} h={20}><path d="M4 7H1v11h3M24 7h3v11h-3" /><rect x="7" y="2" width="14" height="10" strokeWidth="2" /><path d="M10 14l4 4 4-4" /></Svg>,
  overwrite: <Svg w={22} h={20}><rect x="1" y="4" width="12" height="10" strokeWidth="2" /><path d="M15 9h5v10H8v-3M14 1h3l2 4M17 4l2 2 2-3" /></Svg>,
  replace: <Svg w={29} h={19}><path d="M9 15H1V4h9M20 4V2M20 15h8V5h-3M10 7v10h5V5c0-5 6-5 6 0v6" /><path d="M7 9l3-4 3 4M18 9l3 4 3-4" /></Svg>,
  magnet: <Svg w={20} h={20}><path d="M8 4L4.500 7.500C1 11 2 14 4 16s6 2.500 9-.500L16.500 12" strokeWidth="3.500" /><path d="M10 2l2-1.500M17.500 10l1-1.500" strokeWidth="3" /></Svg>,
  link: <Svg w={18} h={19}><path d="M8 11c-2-2 0-4 2-6s4-3 6-1 0 4-2 6M10 8c2 2 0 4-2 6s-4 3-6 1 0-4 2-6" strokeWidth="2.800" /></Svg>,
  locked: <Svg w={16} h={18}><path d="M4 7V4a4 3 0 0 1 8 0v3" /><rect x="1" y="7" width="14" height="10" strokeWidth="2" /><path d="M8 8v8M4 12h8" strokeWidth="2" /></Svg>,
  flag: <Svg w={12} h={13}><path d="M0 0h12v13l-6-3-6 3z" {...fill} /></Svg>,
  marker: <Svg w={11} h={13}><path d="M1 0h9l1 1v8l-5.500 4L0 9V1z" {...fill} /></Svg>,
  zoomFull: <Svg w={28} h={18}><path d="M15 13H1V2h24v3M5 3v4M9 3v3M13 3v3" /><circle cx="20" cy="10" r="4.500" /><path d="M23 13l5 5" strokeWidth="2.500" /></Svg>,
  zoomDetail: <Svg w={28} h={18}><path d="M1 6V2h5M10 2v12M15 14h-5M10 2h9M22 2h4" /><circle cx="20" cy="10" r="4.500" /><path d="M23 13l5 5" strokeWidth="2.500" /></Svg>,
  zoomCustom: <Svg w={29} h={18}><path d="M1 3V1.500h26V5M7 2v3M13 2v3" strokeWidth="2" strokeDasharray="4 1" /><circle cx="21" cy="10" r="4.500" strokeWidth="2.500" /><path d="M24 13l5 5" strokeWidth="3" /></Svg>,
  minus: <Svg w={13} h={13}><circle cx="6.500" cy="6.500" r="6" stroke="#3a3a40" /><path d="M3 6.500h7" strokeWidth="2" /></Svg>,
  plus: <Svg w={13} h={13}><circle cx="6.500" cy="6.500" r="6" stroke="#3a3a40" /><path d="M3 6.500h7M6.500 3v7" strokeWidth="2" /></Svg>,
  speaker: <Svg w={19} h={14}><path d="M1 4.500h3l6-4v13l-6-4H1z" strokeWidth="2" /><path d="M13 4v6M16 2c2 3 2 7 0 10" strokeWidth="2" /></Svg>,
  stack: <Svg w={17} h={14}><rect x="1" y="5" width="12" height="8" /><path d="M4 4V1h12v8h-2" /></Svg>,
  pin: <Svg w={15} h={15}><path d="M9 0l6 6-2 1-2 3-1 3-7-7 3-1 3-2z" {...fill} /><path d="M6 9l-5 6" /></Svg>,
  reset: <Svg w={16} h={15}><path d="M3 4a6 6 0 1 1-1 5M1 1l1 4 4-1M6 7h5" /></Svg>,
  layout: <Svg w={24} h={18}><path d="M5 10V1h18v16H5M0 13h9M7 11l3 2-3 2M11 5h8M11 9h8M13 13h6" /></Svg>,
  transform: <Svg w={26} h={18}><rect x="4" y="4" width="17" height="10" /><path d="M0 11h5M3 1h18M21 1v3M24 6l-3-3M4 17h16M3 14v3M8 7h9M8 10h9" /></Svg>,
  brush: <Svg w={22} h={18}><path d="M21 1l-8 10" strokeWidth="2.500" /><path d="M12 10c-3 0-2 5-4 7 4 0 7-2 6-5z" {...fill} /><path d="M5 4C0 7 0 13 5 15" /></Svg>,
  image: <Svg w={24} h={18}><rect x="1" y="1" width="22" height="16" rx="2" /><path d="M3 14l5-5 4 3 4-4 5 5" /><circle cx="7" cy="5.500" r="1.500" /></Svg>,
  settings: <Svg w={26} h={18}><path d="M14 16H1V1h20v7" strokeWidth="2" /><circle cx="21" cy="12.500" r="3.500" strokeWidth="2" /></Svg>,
  dropper: <Svg w={15} h={15}><path d="M1 14l8-8" strokeWidth="2" /><path d="M8 3l4 4M9 6l5-5" strokeWidth="3" /></Svg>,
  caret: <Svg w={8} h={16}><path d="M1 1h6M1 15h6M4 1v14" strokeWidth="2" /></Svg>,
  clips: <Svg w={21} h={16}><rect x="1" y="1" width="5" height="8" rx="2" /><rect x="8" y="1" width="5" height="8" rx="2" /><rect x="15" y="1" width="5" height="8" rx="2" /><path d="M0 12h21" strokeWidth="4" /><path d="M3 12h3M9 12h3M15 12h3" stroke="#1c1d20" strokeWidth="1" /></Svg>,
  autoSel: <Svg w={20} h={15}><rect x="1" y="1" width="18" height="13" rx="2" strokeWidth="2" /><path d="M8 4L4 7.500 8 11M12 4l4 3.500L12 11" /><path d="M10 5v5" strokeWidth="2" /></Svg>,
  film: <Svg w={19} h={14}><rect x="1" y="1" width="17" height="12" strokeWidth="2" /><path d="M3 2v10M16 2v10" strokeWidth="3" /></Svg>,
  audioSel: <Svg w={19} h={15}><rect x="1" y="1" width="17" height="13" strokeWidth="2" /><path d="M8 4L4.500 7.500 8 11M11 4l3.500 3.500L11 11" strokeWidth="2" /></Svg>,
  sparkle: <Svg w={16} h={15}><path d="M4 2v6M1 5h6M12 0v6M9 3h6M10 9v6M7 12h6" strokeWidth="2" /></Svg>,
  pgMedia: <Svg w={19} h={15}><rect x="1" y="1" width="17" height="13" rx="2" /><path d="M3 11l4-4 4 4 3-3 3 4M6 5h1" /></Svg>,
  pgCut: <Svg w={23} h={17}><path d="M8 3H5v2M5 11v3h3M0 8h8M5 5l3 3-3 3M13 2h7l2 2v8l-2 2h-7M11 2v12" /></Svg>,
  pgEdit: <Svg w={23} h={20}><path d="M1 5h9M1 9h9M13 5h9M13 9h9" stroke="#2f5f93" strokeWidth="2.500" /><path d="M0 15h10M13 15h10" stroke="#5aa284" strokeWidth="3" /><path d="M11.500 0v20" stroke="#c5532f" strokeWidth="2" /></Svg>,
  pgFusion: <Svg w={19} h={20}><path d="M9 19l8-15" strokeWidth="3" /><path d="M2 4h2M6 2h1M3 9h2M7 7h1M11 2h1" strokeWidth="2" /></Svg>,
  pgColor: <Svg w={18} h={18}><circle cx="9" cy="9" r="7" strokeWidth="3" strokeDasharray="2 3.500" /><circle cx="9" cy="9" r="1.500" {...fill} /></Svg>,
  pgSound: <Svg w={15} h={16}><path d="M5 13V3l8-2v10" strokeWidth="2" /><circle cx="3" cy="13" r="2.500" {...fill} /><circle cx="11" cy="11.500" r="2.500" {...fill} /></Svg>,
  pgDeliver: <Svg w={19} h={17}><path d="M10 1c5 0 6 5 8 7-4 3-6 7-12 6L2 15l3-5C4 5 6 2 10 1z" /></Svg>,
  windows: <Svg w={18} h={18}><path d="M0 2.500L7.500 1.500V8.500H0zM8.500 1.400L18 0v8.500H8.500zM0 9.500h7.500v7L0 15.500zM8.500 9.500H18V18l-9.500-1.400z" {...fill} /></Svg>,
  search: <Svg w={19} h={19}><circle cx="12" cy="6.500" r="5.500" /><path d="M8 11l-7 8" strokeWidth="2" /></Svg>,
  tasks: <Svg w={20} h={16}><path d="M1 1v3h10V1M1 15v-3h10v3M15 0v3M15 9v7" /><rect x="1" y="6" width="10" height="4" /><rect x="14" y="4" width="3" height="4" {...fill} /></Svg>,
  folder: <Svg w={24} h={20}><path d="M1 2h8l2 2h11v15H1z" fill="#f0b93d" stroke="none" /><path d="M1 6h22v13H1z" fill="#fbd468" stroke="none" /><path d="M5 19v-7h13v7h-3v-4H9v4z" fill="#3ba0d9" stroke="none" /></Svg>,
  ie: <Svg w={24} h={24}><path d="M5 13h14.500c0-9-14-9-14.500 0 0 8 11 9 14 3" stroke="#5fc3f0" strokeWidth="4" /><path d="M3 21C-2 17 11 0 20 2c2 1 1 3 1 4" stroke="#e3b93d" strokeWidth="2" /></Svg>,
  chrome: <Svg w={26} h={25}><circle cx="11.500" cy="11.500" r="11" fill="#e24b3b" stroke="none" /><path d="M11.500 11.500L1.500 7a11 11 0 0 0 8 15.500z" fill="#3ca455" stroke="none" /><path d="M11.500 11.500L9.500 22.500A11 11 0 0 0 22 8H12z" fill="#f7c93c" stroke="none" /><circle cx="11.500" cy="11.500" r="5" fill="#4b8df0" stroke="#fff" strokeWidth="2" /><circle cx="18.500" cy="18" r="7" fill="#6b4b40" stroke="none" /><path d="M18.500 15v6" stroke="#ddd" /></Svg>,
  note: <Svg w={21} h={20}><path d="M0 0h21v20H0z" fill="#ffdf12" stroke="none" /><path d="M11 20v-9h10z" fill="#2c2c2c" stroke="none" /></Svg>,
  plane: <Svg w={24} h={23}><path d="M0 0h24v23H0z" fill="#3346a5" stroke="none" /><path d="M0 6c6-2 10 2 24-1v18H0z" fill="#5566b8" stroke="none" /><path d="M0 15h24v8H0z" fill="#7d88bd" stroke="none" /><path d="M1 15l7-3 3-5 5 3 7 1-3 5-6 1-5 5-5-3z" fill="#d6d9e4" stroke="none" /></Svg>,
  cam: <Svg w={28} h={34}><circle cx="14" cy="13" r="9" strokeWidth="3" /><circle cx="14" cy="13" r="3" {...fill} /><path d="M7 30h14l-3-6h-8z" {...fill} /><path d="M1 33L26 4" strokeWidth="2" /></Svg>,
  horn: <Svg w={26} h={30}><path d="M1 10h7l10-9v28L8 20H1z" {...fill} /><path d="M20 9c5 2 5 10 0 12" strokeWidth="2.500" /></Svg>,
  mic: <Svg w={20} h={30}><rect x="5" y="1" width="10" height="18" rx="5" {...fill} /><path d="M1 13c0 13 18 13 18 0M10 23v6M4 29h12" strokeWidth="2" /></Svg>,
  pause: <Svg w={18} h={30}><path d="M4 4v22M14 4v22" strokeWidth="6" strokeLinecap="round" /></Svg>,
};

const menus = ["DaVinci Resolve", "File", "Edit", "Trim", "Timeline", "Clip", "Mark", "View", "Playback", "Fusion", "Color", "Fairlight", "Workspace", "Help"];
const tree: [string, number][] = [
  ["Toolbox", 0], ["Video Transitions", 2], ["Audio Transitions", 2], ["Titles", 2], ["Generators", 2], ["Effects", 2],
  ["OpenFX", 1], ["Audio FX", 0], ["FairlightFX", 2],
];
const favorites: [string, string][] = [
  ["Blur...olve", "x"], ["Cros...olve", "x"], ["Text", "t"], ["Heart", "x"], ["3D Ti...lines", "b"], ["3D T...ovie", "b"], ["Lowe...ines", "b"],
];
const titles = ["L Lower 3rd", "M Lower 3rd", "R Lower 3rd", "Scroll", "Text", "Text+"];
const fusionTitles = [
  "3D Lower 3rd Flipping 2Line", "3D Lower 3rd ...ne Background", "3D Lower 3rd P...ehind Slide In", "3D Lower 3rd Plane Slide In",
  "3D Lower 3rd P...es Rotating In", "3D Lower 3rd R...g Plane 2 Line", "3D Lower 3rd Shelf", "3D Lower 3rd Sliding Block", "3D Lower 3rd Text In Tube",
];
const marks = ["01:00:00:00", "01:00:18:00", "01:00:36:00", "01:00:54:00", "01:01:12:00", "01:01:30:00", "01:0"];
const tools = (names: string[], color = "#77777c") =>
  names.map((n) => <Button key={n} $w={40} $color={color} aria-label={n}>{icons[n]}</Button>);

const LaneCells = () => <>{marks.map((m) => <i key={m} />)}</>;

function LeftSide() {
  return (
    <LeftColumn>
      <PanelHead>
        <HeadCell $w={52} $pad={4}><Button $w={20} aria-label="Bin list"><SidebarIcon /></Button><Button $w={28} aria-label="Bin options"><Chevron /></Button></HeadCell>
        <HeadCell $w={49}><Button $w={22} $color="#55555a" aria-label="Back"><Chevron dir="left" /></Button><Button $w={22} $color="#55555a" aria-label="Forward"><Chevron dir="right" /></Button></HeadCell>
        <HeadTitle $grow>Master</HeadTitle>
        <HeadCell $w={66}><Button $w={29} aria-label="Thumbnail view">{icons.grid}</Button><Button $w={28} $color="#d6d6d8" aria-label="List view">{icons.list}</Button></HeadCell>
        <HeadCell $w={57}><Button $w={26} aria-label="Search"><SearchIcon /></Button><Button $w={22} aria-label="Search options"><Chevron /></Button></HeadCell>
        <HeadCell $w={36} $line={false}><Button $w={30} aria-label="More"><DotsIcon /></Button></HeadCell>
      </PanelHead>
      <Split $h={361}>
        <SideColumn>
          <BinRow>Master</BinRow>
          <SmartBins>
            <h3>Smart Bins</h3>
            <p><Chevron dir="right" />Keywords</p>
          </SmartBins>
        </SideColumn>
        <ClipList>
          <ClipHead><strong>Clip Name</strong><Chevron dir="up" /><span>Ree</span></ClipHead>
          <ClipRow $selected>{icons.clips}Timeline 1</ClipRow>
          {Array.from({ length: 13 }, (_, i) => <ClipRow key={i} />)}
          <HScroll />
        </ClipList>
      </Split>
      <PanelHead>
        <HeadCell $w={52} $pad={4}><Button $w={20} aria-label="Effects list"><SidebarIcon /></Button><Button $w={28} aria-label="Effects options"><Chevron /></Button></HeadCell>
        <HeadTitle $grow />
        <Button $w={38} aria-label="Search effects"><SearchIcon /></Button>
      </PanelHead>
      <Split>
        <SideColumn>
          <Tree>
            {tree.map(([name, depth]) => (
              <TreeRow key={name} $depth={depth} $on={name === "Titles"}>{depth === 0 && <Chevron />}{name}</TreeRow>
            ))}
          </Tree>
          <Favorites>
            <h3>Favorites</h3>
            <ul>
              {favorites.map(([name, kind], i) => (
                <EffectRow key={name} $inset={6} $gap={13} $mark={i === 1}>
                  <i>{kind === "x" ? <TransitionIcon /> : kind === "t" ? <TypeIcon>T</TypeIcon> : <BoltIcon />}</i>{name}
                </EffectRow>
              ))}
            </ul>
            <VScroll $top={37} $h={76} />
          </Favorites>
        </SideColumn>
        <TitlesColumn>
          <h3>Titles</h3>
          <TitlesBox>
            {titles.map((t) => (
              <EffectRow key={t} $inset={10} $gap={13} $on={t === "Text+"}>
                <i>{t === "Text+" ? <BoltIcon /> : <TypeIcon>T</TypeIcon>}</i>{t}{t === "Text" && <b>★</b>}
              </EffectRow>
            ))}
          </TitlesBox>
          <h3>Fusion Titles</h3>
          <TitlesBox>
            {fusionTitles.map((t) => <EffectRow key={t} $inset={10} $gap={13}><i><BoltIcon /></i>{t}</EffectRow>)}
          </TitlesBox>
          <VScroll $top={1} $h={168} />
        </TitlesColumn>
      </Split>
    </LeftColumn>
  );
}

function ViewerPanel() {
  return (
    <Viewer>
      <PanelHead>
        <HeadCell $w={67} $pad={4}><HeadTitle $w={44}>22%</HeadTitle><Chevron /></HeadCell>
        <HeadCell $w={80}><HeadTitle>00:00:09:21</HeadTitle></HeadCell>
        <HeadTitle $grow />
        <TimelinePick>Timeline 1<Chevron /></TimelinePick>
        <HeadTitle $grow />
        <HeadTitle>01:00:04:20</HeadTitle>
        <HeadCell $w={36}><Button $w={30} aria-label="Bypass grades">{icons.palette}</Button></HeadCell>
        <HeadCell $w={34} $line={false}><Button $w={30} aria-label="Viewer options"><DotsIcon /></Button></HeadCell>
      </PanelHead>
      <Stage><Frame>116</Frame></Stage>
      <Scrubber type="range" aria-label="Position" min={0} max={1000} defaultValue={492} />
      <Transport>
        <Cluster>
          <Button $w={36} aria-label="Transform">{icons.crop}</Button>
          <Button $w={12} aria-label="Transform options"><Chevron /></Button>
          <Keyframes>
            <Button $w={16} aria-label="Previous keyframe"><Chevron dir="left" /></Button>
            <Button $w={17} aria-label="Keyframe"><Svg w={10} h={10}><circle cx="5" cy="5" r="5" {...fill} /></Svg></Button>
            <Button $w={16} aria-label="Next keyframe"><Chevron dir="right" /></Button>
          </Keyframes>
        </Cluster>
        <Cluster>{["first", "reverse", "stop", "play", "last", "loop"].map((n) => <Button key={n} $w={36} aria-label={n}>{icons[n]}</Button>)}</Cluster>
        <Cluster $end>{["match", "next", "prev"].map((n) => <Button key={n} $w={37} aria-label={n}>{icons[n]}</Button>)}</Cluster>
      </Transport>
    </Viewer>
  );
}

function InspectorPanel() {
  return (
    <Inspector>
      <PanelHead>
        <HeadCell $w={385}><HeadTitle $grow>Fusion Title - Text+</HeadTitle></HeadCell>
        <Button $w={32} aria-label="Inspector options"><DotsIcon /></Button>
      </PanelHead>
      <Tabs><Tab $on>Fusion</Tab><Tab>Video</Tab></Tabs>
      <TemplateRow>
        <Switch type="checkbox" id="template" defaultChecked />
        <label htmlFor="template">Template</label>
        <Cluster $gap={9}><Swatch /><Chevron /><Pipe $h={20} $m={2} /></Cluster>
        {["stack", "pin"].map((n) => <Button key={n} $w={28} $color="#75757a" aria-label={n}>{icons[n]}</Button>)}
        <Button $w={28} $color="#75757a" aria-label="Lock"><LockIcon /></Button>
        <Button $w={27} $color="#75757a" aria-label="Reset">{icons.reset}</Button>
      </TemplateRow>
      <Settings>
        <ModeBar>
          <Mode $on aria-label="Text"><TypeIcon $big>T</TypeIcon></Mode>
          {["layout", "transform", "brush", "image", "settings"].map((n) => <Mode key={n} aria-label={n}>{icons[n]}</Mode>)}
        </ModeBar>
        <SectionTitle><Chevron />Text</SectionTitle>
        <Field>
          <FieldLabel $on htmlFor="styled">Styled Text</FieldLabel>
          <TextBlock>
            <TextArea id="styled" defaultValue="116" spellCheck={false} />
            <Expression>
              <button aria-label="Pick">+</button>
              <input aria-label="Expression" defaultValue="time" spellCheck={false} />
              <PointerMark>{icons.caret}</PointerMark>
            </Expression>
          </TextBlock>
          <span>◆</span>
        </Field>
        <Field>
          <FieldLabel htmlFor="font">Font</FieldLabel>
          <SelectBox><select id="font"><option>Open Sans</option></select><Chevron /></SelectBox>
          <span>◆</span>
        </Field>
        <Field>
          <span />
          <SelectBox><select aria-label="Font style"><option>Bold</option></select><Chevron /></SelectBox>
          <span />
        </Field>
        <Field>
          <FieldLabel htmlFor="color">Color</FieldLabel>
          <ColorRow><input id="color" type="color" defaultValue="#ffffff" /><Button $w={15} aria-label="Pick color">{icons.dropper}</Button></ColorRow>
          <span>◆</span>
        </Field>
        <Field>
          <FieldLabel htmlFor="size">Size</FieldLabel>
          <SizeRow>
            <Range id="size" type="range" $w={138} $track="#1a1a1c" defaultValue={51} />
            <input aria-label="Size value" defaultValue="0.25" />
          </SizeRow>
          <span>◆</span>
        </Field>
        <DefaultDot />
      </Settings>
      <VScroll $top={66} $h={184} $right={-3} />
    </Inspector>
  );
}

function TimelinePanel() {
  return (
    <>
      <EditBar>
        <EditStart><Button $w={26} aria-label="Timeline view">{icons.tlview}</Button></EditStart>
        {tools(["arrow"], c.red)}{tools(["trim", "dyn", "blade"])}
        <Pipe />
        {tools(["insert", "overwrite", "replace"])}
        <Pipe />
        {tools(["magnet", "link"], "#e4e4e6")}{tools(["locked"])}
        <Pipe />
        <Button $w={22} $color="#0c80f0" aria-label="Flag">{icons.flag}</Button>
        <Button $w={20} aria-label="Flag color"><Chevron /></Button>
        <Button $w={24} $color="#0c80f0" aria-label="Marker">{icons.marker}</Button>
        <Button $w={18} aria-label="Marker color"><Chevron /></Button>
        <Pipe />
        {tools(["zoomFull", "zoomDetail"])}{tools(["zoomCustom"], "#d8d8da")}
        <Button $w={32} aria-label="Zoom out">{icons.minus}</Button>
        <Range type="range" aria-label="Zoom" $w={94} $track="#19191c" defaultValue={53} />
        <Button $w={32} aria-label="Zoom in">{icons.plus}</Button>
        <Audio>
          <Button $color="#e4e4e6" aria-label="Mute">{icons.speaker}</Button>
          <Range type="range" aria-label="Volume" $w={84} $track="#2b7a24" $thick defaultValue={100} />
          <Dim>DIM</Dim>
          <Meter />
        </Audio>
      </EditBar>
      <Timeline>
        <TrackRow $h={42}>
          <TrackHead><Timecode>01:00:04:20</Timecode></TrackHead>
          <Ruler>{marks.map((m) => <RulerPart key={m}>{m}</RulerPart>)}</Ruler>
        </TrackRow>
        <TrackRow $h={121}>
          <TrackHead $line />
          <Lane><LaneCells /></Lane>
        </TrackRow>
        <TrackRow $h={57}>
          <TrackHead $line $color="#46699b">
            <Gutter $w={20} />
            <VideoHead>
              <div><Destination>V1</Destination>Video 1</div>
              <div>
                <Button $w={19} $color="#66666b" aria-label="Lock video"><LockIcon /></Button>
                <Button $w={20} $color="#b5b5b8" aria-label="Auto select">{icons.autoSel}</Button>
                <Button $w={19} $color="#dcdcde" aria-label="Enable video">{icons.film}</Button>
              </div>
            </VideoHead>
          </TrackHead>
          <Lane $line><LaneCells /><Clip><span>Text+{icons.sparkle}</span></Clip></Lane>
        </TrackRow>
        <Divider />
        <TrackRow $h={50}>
          <TrackHead $color="#3d8060">
            <Gutter $w={20} />
            <AudioHead>
              <strong>A1</strong>
              <Button $w={30} $color="#77777c" aria-label="Lock audio"><LockIcon /></Button>
              <Button $w={26} $color="#dcdcde" aria-label="Auto select audio">{icons.audioSel}</Button>
              <Toggle>S</Toggle>
              <Toggle>M</Toggle>
              <Button $w={56} $color="#77777c">2.0</Button>
            </AudioHead>
          </TrackHead>
          <Lane><LaneCells /></Lane>
        </TrackRow>
        <TrackRow>
          <TrackHead />
          <Lane $line><LaneCells /></Lane>
        </TrackRow>
        <LaneScroll />
        <RenderBar />
        <Playhead><svg width="16" height="13" viewBox="0 0 16 13"><path d="M0 0h16v5l-8 8-8-8z" fill="#f25a41" /></svg></Playhead>
      </Timeline>
    </>
  );
}

function RecorderWindow() {
  return (
    <Recorder>
      <RecorderTitle>
        <RecorderLogo w={16} h={16} />Movavi Screen Recorder Studio: Capture Screen
        <WindowButtons>
          <Button $w={46} $color="#aaa" aria-label="Minimize recorder"><Svg w={10} h={10}><path d="M0 5h10" strokeWidth="1" /></Svg></Button>
          <Button $w={46} $color="#e4e4e4" aria-label="Maximize recorder"><Svg w={11} h={11}><rect x="1" y="1" width="9" height="9" strokeWidth="1" /></Svg></Button>
          <Button $w={46} $color="#77777c" aria-label="Close recorder"><Svg w={12} h={12}><path d="M1 1l10 10M11 1L1 11" strokeWidth="1" /></Svg></Button>
        </WindowButtons>
      </RecorderTitle>
      <RecorderMenu>{["캡처", "효과", "미디어 파일", "설정", "도움말"].map((m) => <a key={m} href="#recorder">{m}</a>)}</RecorderMenu>
      <RecorderBody>
        <div>
          <Stat $h={50} $line><span>시간:</span><em>00:01:14</em></Stat>
          <Stat $h={42}><span>기록:</span><span>18.8 MB</span></Stat>
          <Stat $h={16}><span>디스크 잔여 공간:</span><span>26.8 GB</span></Stat>
        </div>
        <Sources>
          <Source $off>웹캠<div><SourceButton $off aria-label="Webcam">{icons.cam}</SourceButton></div></Source>
          <Source>시스템 오디오<div><Level $on /><SourceButton $on aria-label="System audio">{icons.horn}</SourceButton></div></Source>
          <Source>마이크<div><Level /><SourceButton aria-label="Microphone">{icons.mic}</SourceButton></div></Source>
        </Sources>
        <Actions>
          <StopButton>정지</StopButton>
          <PauseButton aria-label="Pause">{icons.pause}</PauseButton>
        </Actions>
      </RecorderBody>
    </Recorder>
  );
}

export default function EditorScreen() {
  return (
    <App>
      <Global />
      <TitleBar>
        <ResolveLogo s={15} />Untitled Project 1
        <WindowButtons>
          <Button $w={46} $color="#222" aria-label="Minimize"><Svg w={10} h={10}><path d="M0 6h10" /></Svg></Button>
          <Button $w={46} $color="#222" aria-label="Restore"><Svg w={12} h={12}><rect x="1" y="4" width="7" height="7" /><path d="M4 3V1h7v8H9" /></Svg></Button>
          <Button $w={43} $color="#222" aria-label="Close"><Svg w={12} h={12}><path d="M1 1l10 10M11 1L1 11" /></Svg></Button>
        </WindowButtons>
      </TitleBar>
      <Menu>{menus.map((m) => <MenuLink key={m} href="#menu">{m}</MenuLink>)}</Menu>
      <Toolbar>
        <ToolGroup>
          <ToolTab $w={49} aria-label="Full screen">{icons.screen}</ToolTab>
          <ToolTab $on $w={124}>{icons.media}Media Pool</ToolTab>
          <ToolTab $on $w={141}>{icons.wand}Effects Library</ToolTab>
          <ToolTab $w={116}>{icons.index}Edit Index</ToolTab>
          <ToolTab $w={144}>{icons.sound}Sound Library</ToolTab>
        </ToolGroup>
        <ProjectName>Untitled Project 1</ProjectName>
        <ToolGroup>
          <EditState>Edited</EditState>
          <ToolTab $w={92}>{icons.mixer}Mixer</ToolTab>
          <ToolTab $w={113}>{icons.meta}Metadata</ToolTab>
          <ToolTab $on $w={114}>{icons.inspect}Inspector</ToolTab>
          <ToolTab $w={46} aria-label="Expand">{icons.expand}</ToolTab>
        </ToolGroup>
      </Toolbar>
      <Body>
        <LeftSide />
        <RightColumn>
          <Upper><ViewerPanel /><InspectorPanel /></Upper>
          <TimelinePanel />
        </RightColumn>
      </Body>
      <PageBar>
        <Brand><Svg w={19} h={18}><circle cx="9.500" cy="5" r="4.500" fill="#e4e4e6" stroke="none" /><circle cx="4.500" cy="13" r="4.500" fill="#e4e4e6" stroke="none" /><circle cx="14.500" cy="13" r="4.500" fill="#e4e4e6" stroke="none" /></Svg>DaVinci Resolve 16</Brand>
        <Pages>
          {["pgMedia", "pgCut", "pgEdit", "pgFusion", "pgColor", "pgSound", "pgDeliver"].map((n) => (
            <Page key={n} $on={n === "pgEdit"} aria-label={n.slice(2)}>{icons[n]}</Page>
          ))}
        </Pages>
      </PageBar>
      <Taskbar>
        {["windows", "search", "tasks", "folder", "ie", "chrome", "note", "plane"].map((n) => <Task key={n} aria-label={n}>{icons[n]}</Task>)}
        <Task $on aria-label="DaVinci Resolve"><ResolveLogo s={22} /></Task>
        <Task aria-label="Recorder"><RecorderLogo w={26} h={22} /></Task>
        <Task aria-label="Recorder capture"><RecorderLogo w={26} h={22} /></Task>
      </Taskbar>
      <RecorderWindow />
      <Caption>time/프레임 수 를 입력</Caption>
    </App>
  );
}
